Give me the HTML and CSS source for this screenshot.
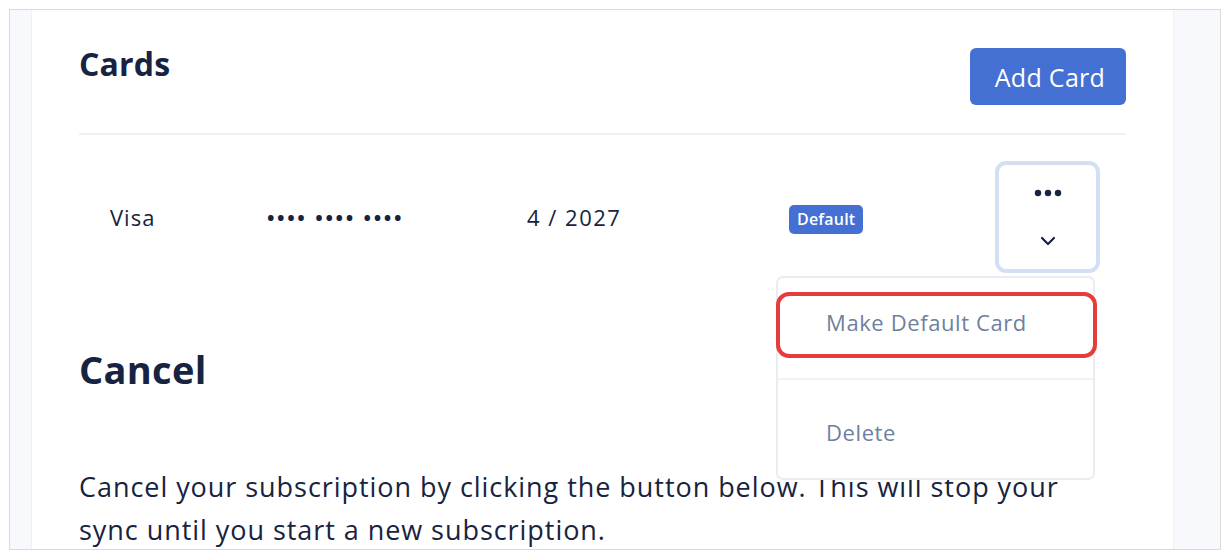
FILE: index.html
```html
<!DOCTYPE html>
<html>
<head>
<meta charset="utf-8">
<link rel="stylesheet" href="styles.css">
</head>
<body>
<div class="frame">
  <div class="panel">
    <div class="header">
      <h2 class="title">Cards</h2>
      <button class="btn-primary">Add Card</button>
    </div>
    <div class="divider"></div>
    <div class="card-row">
      <div class="cell">Visa</div>
      <div class="cell dots-num">•••• •••• ••••</div>
      <div class="cell date">4 / 2027</div>
      <div class="cell"><span class="badge">Default</span></div>
      <div class="toggle-wrap">
        <div class="toggle">
          <svg class="ic-dots" width="28" height="8" viewBox="0 0 28 8"><circle cx="4" cy="4" r="3.2" fill="#172340"/><circle cx="14" cy="4" r="3.2" fill="#172340"/><circle cx="24" cy="4" r="3.2" fill="#172340"/></svg>
          <svg class="ic-chev" width="16" height="10" viewBox="0 0 16 10"><path d="M2 2 L8 8 L14 2" fill="none" stroke="#172340" stroke-width="2.2" stroke-linecap="round" stroke-linejoin="round"/></svg>
        </div>
        <div class="menu">
          <div class="menu-item">Make Default Card</div>
          <div class="menu-sep"></div>
          <div class="menu-item">Delete</div>
          <div class="highlight"></div>
        </div>
      </div>
    </div>
    <h2 class="title-lg">Cancel</h2>
    <p class="text">Cancel your subscription by clicking the button below. This will stop your sync until you start a new subscription.</p>
  </div>
</div>
</body>
</html>
```
FILE: styles.css
```css
* { box-sizing: border-box; }
html, body { margin: 0; padding: 0; background: #ffffff; }
body { font-family: "Open Sans", "Noto Sans", sans-serif; color: #172340; }

.frame {
  margin: 9px;
  width: 1212px;
  height: 541px;
  border: 1px solid #dadada;
  background: #f7f9fc;
  padding: 0 46px 0 21px;
  overflow: hidden;
}
.panel {
  background: #ffffff;
  height: 100%;
  border-left: 1px solid #edf1f8;
  border-right: 1px solid #edf1f8;
  padding: 38px 47px 0 47px;
}
.header {
  display: flex;
  justify-content: space-between;
  align-items: flex-start;
}
.title {
  margin: -4px 0 0 0;
  font-size: 32px;
  font-weight: 700;
  line-height: 40px;
  letter-spacing: 0.2px;
  color: #172340;
}
.btn-primary {
  width: 156px;
  height: 57px;
  border: none;
  border-radius: 6px;
  background: #4470d4;
  color: #ffffff;
  font-family: "Open Sans", "Noto Sans", sans-serif;
  font-size: 25px;
  font-weight: 500;
  letter-spacing: 0.3px;
  padding: 0 0 0 4px;
}
.divider {
  margin-top: 28px;
  height: 2px;
  background: #eef1f6;
}
.card-row {
  display: grid;
  grid-template-columns: 157px 260px 262px 1fr auto;
  align-items: center;
  padding: 26px 26px 0 31px;
  font-size: 22px;
  letter-spacing: 1px;
}
.date { letter-spacing: 1.5px; }
.dots-num { font-size: 20px; letter-spacing: 2.6px; font-weight: 700; }
.badge {
  display: inline-block;
  background: #4470d4;
  color: #ffffff;
  font-size: 16px;
  font-weight: 600;
  letter-spacing: 0.2px;
  height: 29px;
  line-height: 29px;
  padding: 0 8px;
  border-radius: 5px;
}
.toggle-wrap { position: relative; letter-spacing: 0; }
.toggle {
  width: 105px;
  height: 112px;
  border: 4px solid #d3dff5;
  border-radius: 11px;
  display: flex;
  flex-direction: column;
  align-items: center;
  padding-top: 24px;
  gap: 39px;
}
.menu {
  position: absolute;
  top: 115px;
  right: 5px;
  width: 319px;
  height: 204px;
  background: #ffffff;
  border: 2px solid #eaecef;
  border-radius: 7px;
  z-index: 2;
}
.menu-item {
  height: 100px;
  padding: 29px 0 0 48px;
  font-size: 22px;
  letter-spacing: 0.6px;
  color: #6e7f9e;
  line-height: 30px;
}
.menu-item + .menu-sep + .menu-item { padding-top: 37px; }
.menu-sep { height: 2px; background: #eff2f6; }
.highlight {
  position: absolute;
  left: -2px;
  top: 14px;
  width: 321px;
  height: 66px;
  border: 4px solid #e53c3c;
  border-radius: 13px;
}
.title-lg {
  margin: 72px 0 0 0;
  font-size: 38px;
  font-weight: 700;
  line-height: 48px;
  letter-spacing: 0.3px;
}
.text {
  margin: 72px 0 0 0;
  font-size: 27px;
  line-height: 43px;
  letter-spacing: 0.95px;
  width: 1000px;
}
```
